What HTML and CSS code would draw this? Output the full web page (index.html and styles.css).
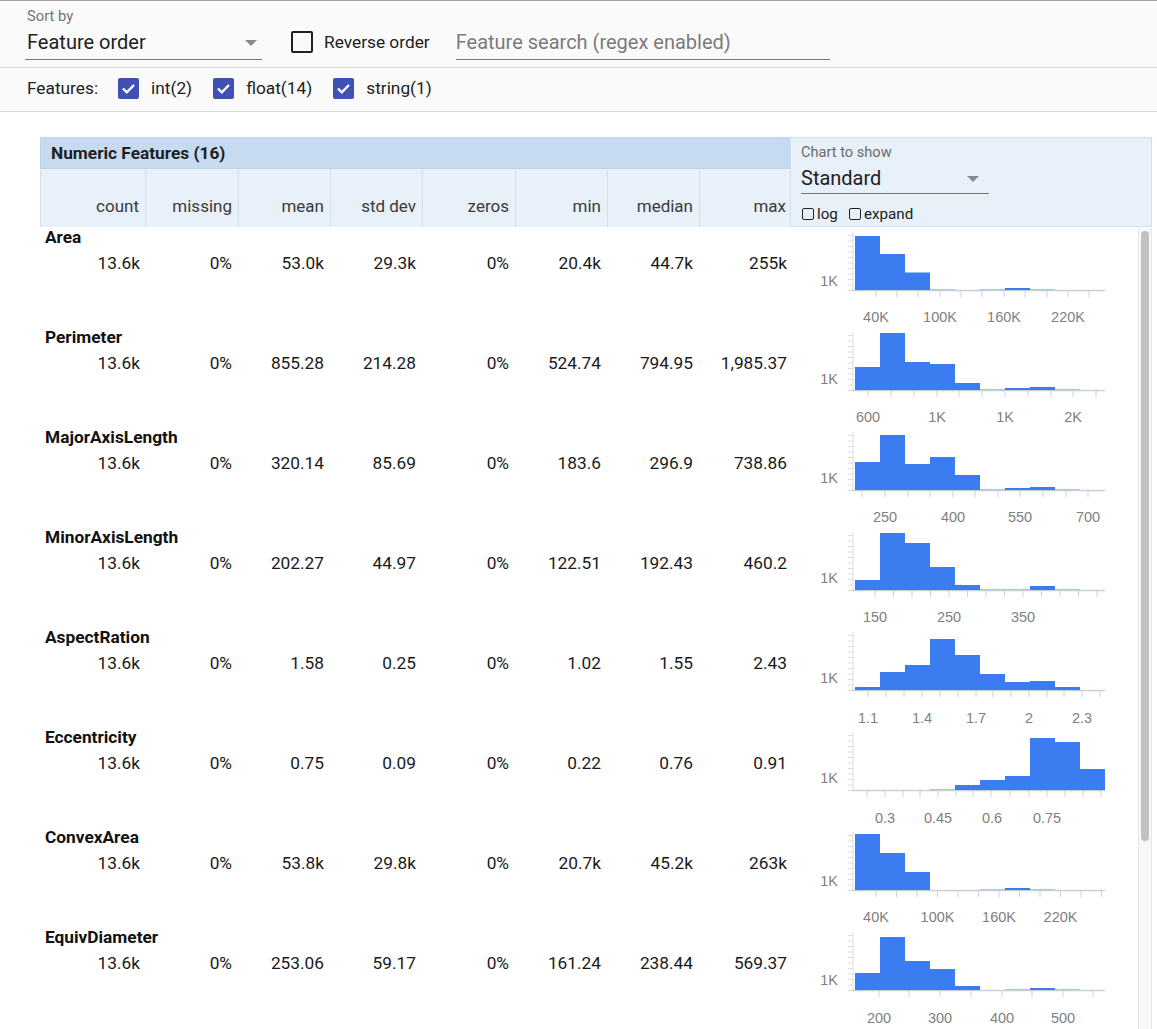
FILE: index.html
```html
<!DOCTYPE html>
<html>
<head>
<meta charset="utf-8">
<link rel="stylesheet" href="styles.css">
</head>
<body>
<svg class="defs" width="0" height="0" aria-hidden="true">
  <defs>
    <g id="yax">
      <path d="M53 5V63" stroke="#dcdcdc" stroke-width="1" fill="none"/>
      <path d="M48 63.5h5M48 58h5M48 52.5h5M48 47h5M48 41.5h5M48 36h5M48 30.5h5M48 25h5M48 19.5h5M48 14h5M48 8.5h5" stroke="#dcdcdc" stroke-width="1" fill="none"/>
      <path d="M52 63.5H305" stroke="#c9ced8" stroke-width="1.5" fill="none"/>
    </g>
  </defs>
</svg>

<div class="top">
  <div class="row1">
    <div class="sort">
      <div class="sort-label">Sort by</div>
      <div class="select"><span>Feature order</span><span class="arrow"></span></div>
    </div>
    <div class="reverse"><span class="box"></span><span>Reverse order</span></div>
    <div class="search">Feature search (regex enabled)</div>
  </div>
  <div class="row2">
    <span class="feat-label">Features:</span>
    <span class="cb"><svg width="21" height="21" viewBox="0 0 21 21"><path d="M5 10.5l3.8 3.8L16 7" stroke="#fff" stroke-width="2.4" fill="none"/></svg></span><span class="cb-text">int(2)</span>
    <span class="cb"><svg width="21" height="21" viewBox="0 0 21 21"><path d="M5 10.5l3.8 3.8L16 7" stroke="#fff" stroke-width="2.4" fill="none"/></svg></span><span class="cb-text">float(14)</span>
    <span class="cb"><svg width="21" height="21" viewBox="0 0 21 21"><path d="M5 10.5l3.8 3.8L16 7" stroke="#fff" stroke-width="2.4" fill="none"/></svg></span><span class="cb-text">string(1)</span>
  </div>
</div>

<div class="main">
  <div class="table">
    <div class="head">
      <div class="head-left">
        <div class="title">Numeric Features (16)</div>
        <div class="cols">
          <div class="col">count</div>
          <div class="col">missing</div>
          <div class="col">mean</div>
          <div class="col">std dev</div>
          <div class="col">zeros</div>
          <div class="col">min</div>
          <div class="col">median</div>
          <div class="col">max</div>
        </div>
      </div>
      <div class="chartctl">
        <div class="ctl-label">Chart to show</div>
        <div class="ctl-select"><span>Standard</span><span class="arrow"></span></div>
        <div class="ctl-opts">
          <span class="sbox"></span><span class="opt">log</span>
          <span class="sbox"></span><span class="opt">expand</span>
        </div>
      </div>
    </div>

    <div class="body">
      <div class="rows">

        <div class="row">
          <div class="stats">
            <div class="fname">Area</div>
            <div class="vals"><span>13.6k</span><span>0%</span><span>53.0k</span><span>29.3k</span><span>0%</span><span>20.4k</span><span>44.7k</span><span>255k</span></div>
          </div>
          <svg class="chart" width="310" height="100" viewBox="0 0 310 100">
            <use href="#yax"/>
            <g class="bars">
              <rect x="55" y="9" width="25" height="54"/>
              <rect x="80" y="27" width="25" height="36"/>
              <rect x="105" y="45.5" width="25" height="17.5"/>
              <rect class="lo" x="130" y="62" width="25" height="1"/>
              <rect class="lo" x="180" y="62" width="25" height="1"/>
              <rect x="205" y="61" width="25" height="2"/>
              <rect class="lo" x="230" y="62" width="25" height="1"/>
            </g>
            <path class="tk" d="M76 64v6M97 64v6M118 64v6M140 64v6M161 64v6M182 64v6M204 64v6M225 64v6M247 64v6M268 64v6M289 64v6"/>
            <text class="ax" x="38" y="59" text-anchor="end">1K</text>
            <text class="ax" x="76" y="95" text-anchor="middle">40K</text>
            <text class="ax" x="140" y="95" text-anchor="middle">100K</text>
            <text class="ax" x="204" y="95" text-anchor="middle">160K</text>
            <text class="ax" x="268" y="95" text-anchor="middle">220K</text>
          </svg>
        </div>

        <div class="row">
          <div class="stats">
            <div class="fname">Perimeter</div>
            <div class="vals"><span>13.6k</span><span>0%</span><span>855.28</span><span>214.28</span><span>0%</span><span>524.74</span><span>794.95</span><span>1,985.37</span></div>
          </div>
          <svg class="chart" width="310" height="100" viewBox="0 0 310 100">
            <use href="#yax"/>
            <g class="bars">
              <rect x="55" y="40" width="25" height="23"/>
              <rect x="80" y="6" width="25" height="57"/>
              <rect x="105" y="35" width="25" height="28"/>
              <rect x="130" y="37" width="25" height="26"/>
              <rect x="155" y="56" width="25" height="7"/>
              <rect class="lo" x="180" y="62" width="25" height="1"/>
              <rect x="205" y="61" width="25" height="2"/>
              <rect x="230" y="60" width="25" height="3"/>
              <rect class="lo" x="255" y="62" width="25" height="1"/>
            </g>
            <path class="tk" d="M68 64v6M91 64v6M114 64v6M137 64v6M159 64v6M182 64v6M205 64v6M228 64v6M251 64v6M273 64v6M296 64v6"/>
            <text class="ax" x="38" y="57" text-anchor="end">1K</text>
            <text class="ax" x="68" y="95" text-anchor="middle">600</text>
            <text class="ax" x="137" y="95" text-anchor="middle">1K</text>
            <text class="ax" x="205" y="95" text-anchor="middle">1K</text>
            <text class="ax" x="273" y="95" text-anchor="middle">2K</text>
          </svg>
        </div>

        <div class="row">
          <div class="stats">
            <div class="fname">MajorAxisLength</div>
            <div class="vals"><span>13.6k</span><span>0%</span><span>320.14</span><span>85.69</span><span>0%</span><span>183.6</span><span>296.9</span><span>738.86</span></div>
          </div>
          <svg class="chart" width="310" height="100" viewBox="0 0 310 100">
            <use href="#yax"/>
            <g class="bars">
              <rect x="55" y="35" width="25" height="28"/>
              <rect x="80" y="8" width="25" height="55"/>
              <rect x="105" y="37" width="25" height="26"/>
              <rect x="130" y="30" width="25" height="33"/>
              <rect x="155" y="48" width="25" height="15"/>
              <rect class="lo" x="180" y="62" width="25" height="1"/>
              <rect x="205" y="61" width="25" height="2"/>
              <rect x="230" y="60" width="25" height="3"/>
              <rect class="lo" x="255" y="62" width="25" height="1"/>
            </g>
            <path class="tk" d="M62 64v6M85 64v6M108 64v6M130 64v6M153 64v6M175 64v6M198 64v6M220 64v6M243 64v6M266 64v6M288 64v6"/>
            <text class="ax" x="38" y="56" text-anchor="end">1K</text>
            <text class="ax" x="85" y="95" text-anchor="middle">250</text>
            <text class="ax" x="153" y="95" text-anchor="middle">400</text>
            <text class="ax" x="220" y="95" text-anchor="middle">550</text>
            <text class="ax" x="288" y="95" text-anchor="middle">700</text>
          </svg>
        </div>

        <div class="row">
          <div class="stats">
            <div class="fname">MinorAxisLength</div>
            <div class="vals"><span>13.6k</span><span>0%</span><span>202.27</span><span>44.97</span><span>0%</span><span>122.51</span><span>192.43</span><span>460.2</span></div>
          </div>
          <svg class="chart" width="310" height="100" viewBox="0 0 310 100">
            <use href="#yax"/>
            <g class="bars">
              <rect x="55" y="53" width="25" height="10"/>
              <rect x="80" y="6" width="25" height="57"/>
              <rect x="105" y="16" width="25" height="47"/>
              <rect x="130" y="40" width="25" height="23"/>
              <rect x="155" y="58" width="25" height="5"/>
              <rect class="lo" x="180" y="62" width="25" height="1"/>
              <rect class="lo" x="205" y="62" width="25" height="1"/>
              <rect x="230" y="59" width="25" height="4"/>
              <rect class="lo" x="255" y="62" width="25" height="1"/>
            </g>
            <path class="tk" d="M75 64v6M93.5 64v6M112 64v6M130.5 64v6M149 64v6M167.5 64v6M186 64v6M204.5 64v6M223 64v6M241.5 64v6M260 64v6M278.5 64v6M297 64v6"/>
            <text class="ax" x="38" y="56" text-anchor="end">1K</text>
            <text class="ax" x="75" y="95" text-anchor="middle">150</text>
            <text class="ax" x="149" y="95" text-anchor="middle">250</text>
            <text class="ax" x="223" y="95" text-anchor="middle">350</text>
          </svg>
        </div>

        <div class="row">
          <div class="stats">
            <div class="fname">AspectRation</div>
            <div class="vals"><span>13.6k</span><span>0%</span><span>1.58</span><span>0.25</span><span>0%</span><span>1.02</span><span>1.55</span><span>2.43</span></div>
          </div>
          <svg class="chart" width="310" height="100" viewBox="0 0 310 100">
            <use href="#yax"/>
            <g class="bars">
              <rect x="55" y="60" width="25" height="3"/>
              <rect x="80" y="45" width="25" height="18"/>
              <rect x="105" y="38" width="25" height="25"/>
              <rect x="130" y="12" width="25" height="51"/>
              <rect x="155" y="28" width="25" height="35"/>
              <rect x="180" y="47" width="25" height="16"/>
              <rect x="205" y="55" width="25" height="8"/>
              <rect x="230" y="54" width="25" height="9"/>
              <rect x="255" y="60" width="25" height="3"/>
            </g>
            <path class="tk" d="M68 64v6M86 64v6M104 64v6M122 64v6M140 64v6M158 64v6M176 64v6M193 64v6M211 64v6M229 64v6M247 64v6M264 64v6M282 64v6M300 64v6"/>
            <text class="ax" x="38" y="56" text-anchor="end">1K</text>
            <text class="ax" x="68" y="96" text-anchor="middle">1.1</text>
            <text class="ax" x="122" y="96" text-anchor="middle">1.4</text>
            <text class="ax" x="176" y="96" text-anchor="middle">1.7</text>
            <text class="ax" x="229" y="96" text-anchor="middle">2</text>
            <text class="ax" x="282" y="96" text-anchor="middle">2.3</text>
          </svg>
        </div>

        <div class="row">
          <div class="stats">
            <div class="fname">Eccentricity</div>
            <div class="vals"><span>13.6k</span><span>0%</span><span>0.75</span><span>0.09</span><span>0%</span><span>0.22</span><span>0.76</span><span>0.91</span></div>
          </div>
          <svg class="chart" width="310" height="100" viewBox="0 0 310 100">
            <use href="#yax"/>
            <g class="bars">
              <rect class="lo" x="130" y="62" width="25" height="1"/>
              <rect x="155" y="58" width="25" height="5"/>
              <rect x="180" y="53" width="25" height="10"/>
              <rect x="205" y="49" width="25" height="14"/>
              <rect x="230" y="11" width="25" height="52"/>
              <rect x="255" y="15" width="25" height="48"/>
              <rect x="280" y="42" width="25" height="21"/>
            </g>
            <path class="tk" d="M67 64v6M85 64v6M103 64v6M120 64v6M138 64v6M156 64v6M173 64v6M191 64v6M210 64v6M229 64v6M247 64v6M265 64v6M283 64v6M301 64v6"/>
            <text class="ax" x="38" y="56" text-anchor="end">1K</text>
            <text class="ax" x="85" y="96" text-anchor="middle">0.3</text>
            <text class="ax" x="138" y="96" text-anchor="middle">0.45</text>
            <text class="ax" x="192" y="96" text-anchor="middle">0.6</text>
            <text class="ax" x="247" y="96" text-anchor="middle">0.75</text>
          </svg>
        </div>

        <div class="row">
          <div class="stats">
            <div class="fname">ConvexArea</div>
            <div class="vals"><span>13.6k</span><span>0%</span><span>53.8k</span><span>29.8k</span><span>0%</span><span>20.7k</span><span>45.2k</span><span>263k</span></div>
          </div>
          <svg class="chart" width="310" height="100" viewBox="0 0 310 100">
            <use href="#yax"/>
            <g class="bars">
              <rect x="55" y="7" width="25" height="56"/>
              <rect x="80" y="26" width="25" height="37"/>
              <rect x="105" y="45" width="25" height="18"/>
              <rect class="lo" x="180" y="62" width="25" height="1"/>
              <rect x="205" y="61" width="25" height="2"/>
              <rect class="lo" x="230" y="62" width="25" height="1"/>
            </g>
            <path class="tk" d="M76 64v6M96.5 64v6M117 64v6M137.5 64v6M158 64v6M178.5 64v6M199 64v6M219.5 64v6M240 64v6M260.5 64v6M281 64v6M301.5 64v6"/>
            <text class="ax" x="38" y="59" text-anchor="end">1K</text>
            <text class="ax" x="76" y="95" text-anchor="middle">40K</text>
            <text class="ax" x="137.5" y="95" text-anchor="middle">100K</text>
            <text class="ax" x="199" y="95" text-anchor="middle">160K</text>
            <text class="ax" x="260.5" y="95" text-anchor="middle">220K</text>
          </svg>
        </div>

        <div class="row">
          <div class="stats">
            <div class="fname">EquivDiameter</div>
            <div class="vals"><span>13.6k</span><span>0%</span><span>253.06</span><span>59.17</span><span>0%</span><span>161.24</span><span>238.44</span><span>569.37</span></div>
          </div>
          <svg class="chart" width="310" height="100" viewBox="0 0 310 100">
            <use href="#yax"/>
            <g class="bars">
              <rect x="55" y="46" width="25" height="17"/>
              <rect x="80" y="10" width="25" height="53"/>
              <rect x="105" y="34" width="25" height="29"/>
              <rect x="130" y="42" width="25" height="21"/>
              <rect x="155" y="59" width="25" height="4"/>
              <rect class="lo" x="205" y="62" width="25" height="1"/>
              <rect x="230" y="61" width="25" height="2"/>
              <rect class="lo" x="255" y="62" width="25" height="1"/>
            </g>
            <path class="tk" d="M79 64v6M109 64v6M140 64v6M171 64v6M202 64v6M232 64v6M263 64v6M293 64v6"/>
            <text class="ax" x="38" y="58" text-anchor="end">1K</text>
            <text class="ax" x="79" y="96" text-anchor="middle">200</text>
            <text class="ax" x="140" y="96" text-anchor="middle">300</text>
            <text class="ax" x="202" y="96" text-anchor="middle">400</text>
            <text class="ax" x="263" y="96" text-anchor="middle">500</text>
          </svg>
        </div>

      </div>
      <div class="scrollbar"><div class="thumb"></div></div>
    </div>
  </div>
</div>
</body>
</html>
```

FILE: styles.css
```css
* { box-sizing: border-box; }

html, body {
  margin: 0;
  padding: 0;
}

body {
  width: 1157px;
  height: 1029px;
  overflow: hidden;
  background: #ffffff;
  color: #212121;
  font-family: Roboto, "Noto Sans", "Liberation Sans", sans-serif;
}

.defs {
  position: absolute;
  width: 0;
  height: 0;
}

/* ---------- top controls ---------- */
.top {
  background: #fafafa;
  border-top: 1px solid #9e9e9e;
}

.row1 {
  height: 67px;
  display: flex;
  align-items: flex-start;
  padding-left: 25px;
  border-bottom: 1px solid #d9d9d9;
}

.sort {
  width: 237px;
  padding-top: 7px;
}

.sort-label {
  font-size: 14.8px;
  line-height: 17px;
  color: #757575;
  padding-left: 2px;
}

.select {
  margin-top: 5px;
  height: 30px;
  display: flex;
  justify-content: space-between;
  align-items: flex-start;
  border-bottom: 1px solid #757575;
  padding-left: 2px;
  padding-right: 5px;
  font-size: 20px;
  line-height: 24px;
  color: #212121;
}

.arrow {
  width: 0;
  height: 0;
  margin-top: 10px;
  border-left: 6px solid transparent;
  border-right: 6px solid transparent;
  border-top: 6px solid #8a8a8a;
}

.reverse {
  margin-left: 29px;
  margin-top: 30px;
  display: flex;
  align-items: center;
  height: 22px;
  font-size: 17.3px;
  color: #212121;
}

.box {
  width: 22px;
  height: 22px;
  border: 2px solid #212121;
  border-radius: 2px;
  margin-right: 11px;
}

.search {
  margin-left: 26px;
  margin-top: 29px;
  width: 374px;
  height: 30px;
  border-bottom: 1px solid #757575;
  font-size: 20px;
  line-height: 24px;
  color: #7a7a7a;
}

.row2 {
  height: 44px;
  display: flex;
  align-items: center;
  padding-left: 27px;
  padding-bottom: 3px;
  border-bottom: 1px solid #d6d6d6;
  font-size: 17.3px;
}

.feat-label {
  margin-right: 20px;
}

.cb {
  width: 21px;
  height: 21px;
  background: #3f51b5;
  border-radius: 2px;
  display: flex;
}

.cb-text {
  margin-left: 12px;
  margin-right: 21px;
}

/* ---------- table ---------- */
.main {
  padding: 25px 0 0 40px;
}

.table {
  width: 1112px;
}

.head {
  display: flex;
  height: 90px;
}

.head-left {
  width: 750px;
  display: flex;
  flex-direction: column;
}

.title {
  height: 32px;
  background: #c6daf0;
  border: 1px solid #c3d3e6;
  border-right: none;
  padding-left: 10px;
  font-size: 17.3px;
  font-weight: 700;
  line-height: 30px;
  color: #1f1f1f;
}

.cols {
  flex: 1;
  display: grid;
  grid-template-columns: 105px 93px 92px 92px 93px 92px 92px 91px;
  background: #e8f0f9;
  border-left: 1px solid #d3deeb;
}

.col {
  border-right: 1px solid #d3deeb;
  display: flex;
  align-items: flex-end;
  justify-content: flex-end;
  padding: 0 6px 11px 0;
  font-size: 17px;
  line-height: 20px;
  color: #3a3a3a;
}

.col:last-child {
  border-right: none;
  padding-right: 5px;
}

.chartctl {
  width: 362px;
  background: #e8f0f9;
  border: 1px solid #d3deeb;
  padding: 6px 0 0 10px;
}

.ctl-label {
  font-size: 14.6px;
  line-height: 17px;
  color: #6b6b6b;
}

.ctl-select {
  width: 188px;
  height: 28px;
  margin-top: 5px;
  display: flex;
  justify-content: space-between;
  align-items: flex-start;
  border-bottom: 1px solid #757575;
  padding-right: 10px;
  font-size: 20px;
  line-height: 24px;
  color: #212121;
}

.ctl-select .arrow {
  margin-top: 10px;
  border-left-width: 6px;
  border-right-width: 6px;
  border-top-width: 6px;
}

.ctl-opts {
  margin-top: 12px;
  display: flex;
  align-items: center;
  height: 16px;
  font-size: 15.2px;
  color: #212121;
}

.sbox {
  width: 12px;
  height: 12px;
  border: 1.5px solid #212121;
  border-radius: 2px;
  margin-left: 1px;
  margin-right: 3px;
}

.opt {
  margin-right: 10px;
}

/* ---------- body ---------- */
.body {
  display: flex;
  height: 802px;
}

.rows {
  width: 1098px;
  overflow: hidden;
}

.row {
  height: 100px;
  display: flex;
}

.stats {
  width: 750px;
}

.fname {
  padding-left: 5px;
  font-size: 17.3px;
  font-weight: 700;
  line-height: 20px;
  color: #111;
}

.vals {
  margin-top: 6px;
  display: grid;
  grid-template-columns: 105px 93px 92px 92px 93px 92px 92px 91px;
  font-size: 17.3px;
  line-height: 21px;
  color: #1a1a1a;
}

.vals span {
  text-align: right;
  padding-right: 5px;
}

.vals span:nth-child(n+2) {
  padding-right: 6px;
}

.vals span:last-child {
  padding-right: 3px;
}

.chart {
  margin-left: 10px;
  display: block;
  flex: none;
}

.bars rect {
  fill: #3b7cf0;
}

.bars rect.lo {
  fill: #a9c5f6;
}

.tk {
  stroke: #d2d2d2;
  stroke-width: 1;
  fill: none;
}

.ax {
  font-family: "Liberation Sans", Arial, sans-serif;
  font-size: 14.5px;
  fill: #7f7f7f;
}

.scrollbar {
  width: 14px;
  margin-top: 1px;
  background: #f8f8f8;
  border-left: 1px solid #e6e6e6;
  border-right: 1px solid #e6e6e6;
  padding: 3px 0 0 2px;
}

.thumb {
  width: 8px;
  height: 610px;
  background: #c1c1c1;
  border-radius: 4px;
}
```
